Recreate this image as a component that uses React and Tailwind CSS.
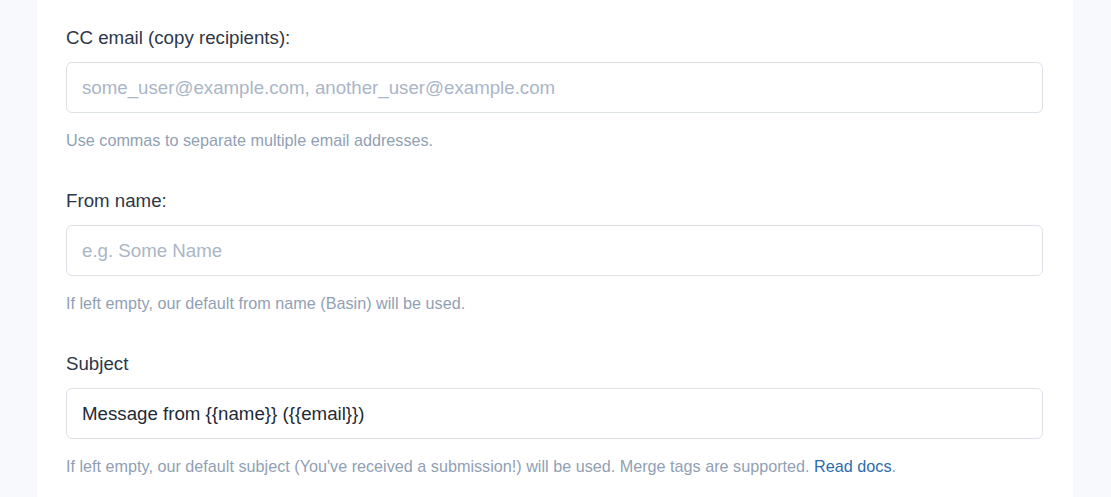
const fields = [
  {
    label: "CC email (copy recipients):",
    placeholder: "some_user@example.com, another_user@example.com",
    value: "",
    help: "Use commas to separate multiple email addresses.",
  },
  {
    label: "From name:",
    placeholder: "e.g. Some Name",
    value: "",
    help: "If left empty, our default from name (Basin) will be used.",
  },
  {
    label: "Subject",
    placeholder: "",
    value: "Message from {{name}} ({{email}})",
    help: "If left empty, our default subject (You've received a submission!) will be used. Merge tags are supported.",
    link: "Read docs",
  },
];

const App = () => {
  return (
    <div className="min-h-[497px] bg-[#f7f9fc] px-[37px] font-['Liberation_Sans',Arial,sans-serif]">
      <div className="mr-[1px] min-h-[497px] bg-white px-[29px] pt-[24px]">
        {fields.map((field, index) => (
          <div key={index} className="mb-[36px] w-[977px]">
            <label className="block text-[18.7px] leading-[27px] text-[#2d3748]">
              {field.label}
            </label>
            <input
              type="text"
              readOnly
              defaultValue={field.value}
              placeholder={field.placeholder}
              className="mt-[11px] block h-[51px] w-full rounded-[6px] border border-[#dde2e8] bg-white px-[15px] text-[18.7px] text-[#1f2a37] outline-none placeholder:text-[#aab6c6]"
            />
            <p className="mt-[16px] text-[16.2px] leading-[22px] text-[#919fb4]">
              {field.help}
              {field.link && (
                <>
                  {" "}
                  <a href="#" className="text-[#2b6cb0]">
                    {field.link}
                  </a>
                  .
                </>
              )}
            </p>
          </div>
        ))}
      </div>
    </div>
  );
};

export default App;
